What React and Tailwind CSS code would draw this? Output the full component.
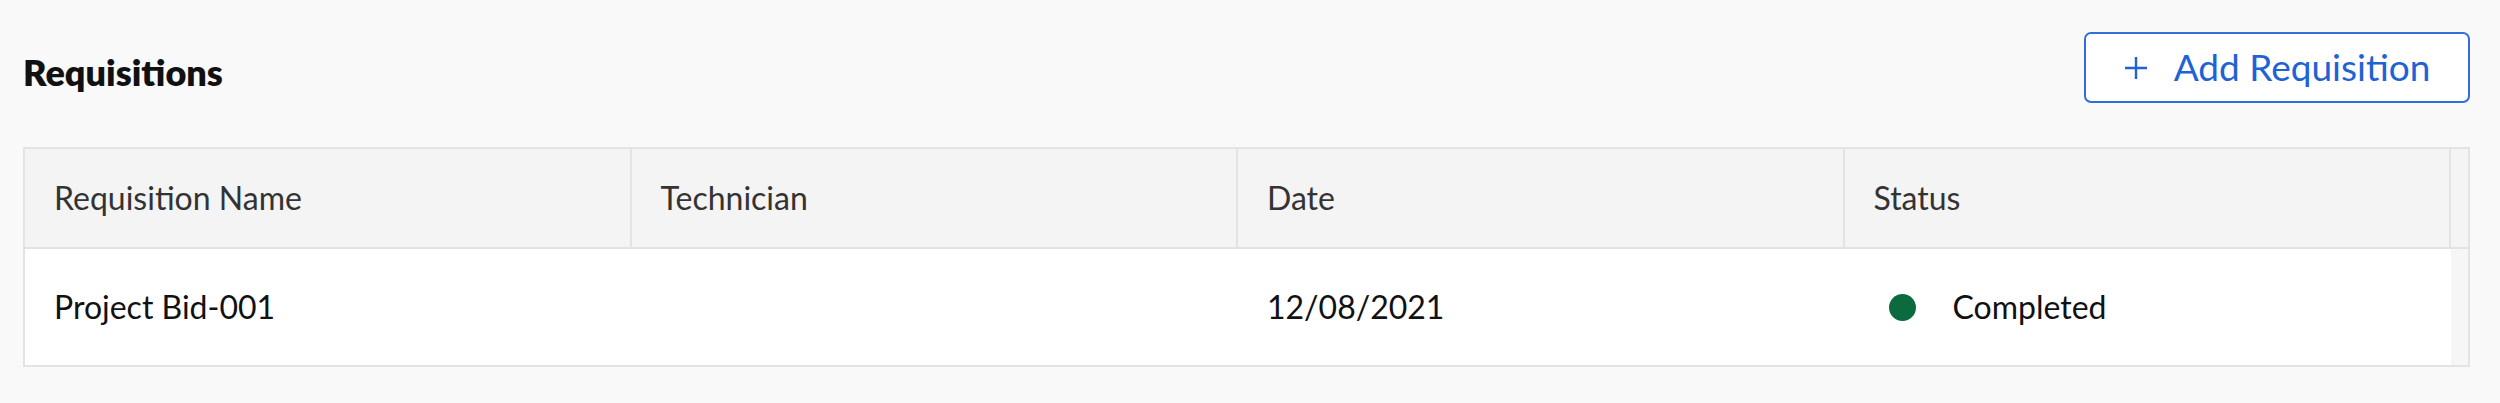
import React from 'react'

const cols = ['Requisition Name', 'Technician', 'Date', 'Status']

export default function App() {
  return (
    <div className="min-h-[403px] w-[2500px] bg-[#f9f9f9] pl-[23px] pr-[30px] pt-[32px]" style={{ fontFamily: 'Lato, "Noto Sans", sans-serif' }}>
      <div className="flex items-center justify-between">
        <h1 className="pt-[8px] text-[36px] font-extrabold text-[#111]">Requisitions</h1>
        <button className="flex h-[71px] w-[386px] items-center justify-center rounded-[7px] border-2 border-[#2f6fdc] bg-white text-[37px] text-[#1f62d6]">
          <svg width="24" height="24" viewBox="0 0 24 24" className="mr-[26px]">
            <path d="M12 1v22M1 12h22" stroke="#1f62d6" strokeWidth="2.4" fill="none" />
          </svg>
          <span className="pb-[2px]">Add Requisition</span>
        </button>
      </div>

      <div className="mt-[44px] border-2 border-[#e3e3e3] bg-white">
        <div className="grid h-[98px] grid-cols-[1fr_1fr_1fr_1fr_17px] bg-[#f4f4f4]">
          {cols.map(c => (
            <div key={c} className="flex items-center border-r-2 border-[#e3e3e3] pl-[29px] text-[32px] text-[#333]">
              {c}
            </div>
          ))}
          <div />
        </div>
        <div className="grid h-[118px] grid-cols-[1fr_1fr_1fr_1fr_17px] border-t-2 border-[#e3e3e3] text-[32px] text-[#111]">
          <div className="flex items-center pl-[29px]">Project Bid-001</div>
          <div />
          <div className="flex items-center pl-[29px]">12/08/2021</div>
          <div className="flex items-center pl-[44px]">
            <span className="h-[27px] w-[27px] rounded-full bg-[#0b6b3f]" />
            <span className="ml-[37px]">Completed</span>
          </div>
          <div className="bg-[#f6f6f6]" />
        </div>
      </div>
    </div>
  )
}
